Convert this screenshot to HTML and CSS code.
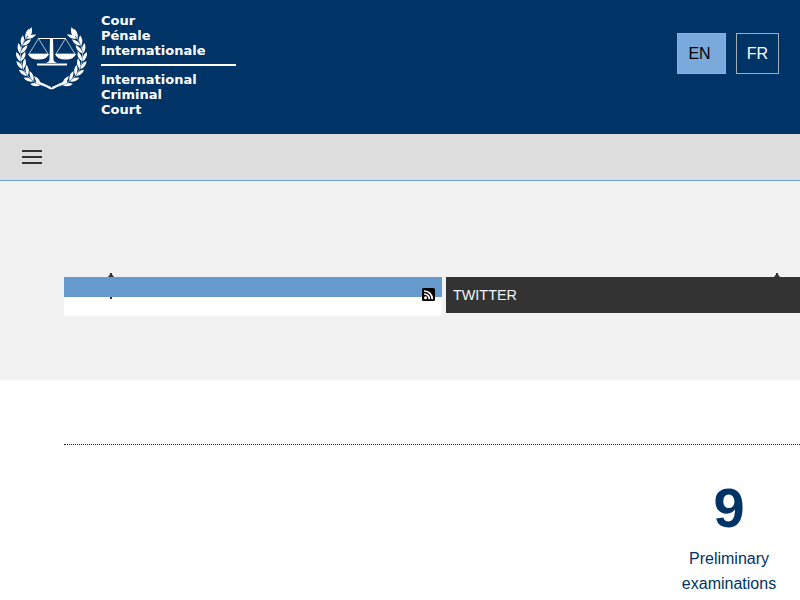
FILE: index.html
```html
<!DOCTYPE html>
<html lang="en">
<head>
<meta charset="utf-8">
<title>International Criminal Court</title>
<link rel="stylesheet" href="styles.css">
</head>
<body>
<header class="site-header">
  <a class="brand" href="#">
    <svg class="emblem" width="76" height="70" viewBox="14 24 76 70" aria-hidden="true">
      <defs>
        <g id="leaf">
          <path d="M51 87.500 Q46 91.500 41 89.500 Q45 85 51 87.500Z"/>
          <path d="M51 86.500 Q45 86 42 80.500 Q48.500 80.500 51 86.500Z"/>
        </g>
        <g id="branch">
          <use href="#leaf" transform="rotate(20 51 56)"/>
          <use href="#leaf" transform="rotate(35 51 56)"/>
          <use href="#leaf" transform="rotate(50 51 56)"/>
          <use href="#leaf" transform="rotate(65 51 56)"/>
          <use href="#leaf" transform="rotate(80 51 56)"/>
          <use href="#leaf" transform="rotate(95 51 56)"/>
          <use href="#leaf" transform="rotate(110 51 56)"/>
          <use href="#leaf" transform="rotate(125 51 56)"/>
          <path class="stem" d="M51 87 A31.500 31.500 0 0 1 27 36"/>
          <path d="M31.500 27 Q33.500 33 28.500 39 Q26.500 32 31.500 27Z"/>
        </g>
      </defs>
      <g class="wreath">
        <use href="#branch"/>
        <use href="#branch" transform="matrix(-1 0 0 1 103 0)"/>
        <path d="M36 81 Q44 82.500 52.500 88.500 L50.500 89.500 Q43 85 36 83Z"/>
        <path d="M67 81 Q59 82.500 50.500 88.500 L52.500 89.500 Q60 85 67 83Z"/>
      </g>
      <g class="scales">
        <path d="M50 38 H53 L53.500 60 Q54 62 57 63 H46 Q49 62 49.500 60Z"/>
        <rect x="37" y="63.500" width="30" height="2"/>
        <path d="M38 38 H66 V39 H38Z"/>
        <path class="cord" d="M38.500 38.500 L29 54 H48 Z M65.500 38.500 L56 54 H75 Z"/>
        <path d="M28 54 H49 Q47 59.500 38.500 59.500 Q30 59.500 28 54Z"/>
        <path d="M55 54 H76 Q74 59.500 65.500 59.500 Q57 59.500 55 54Z"/>
      </g>
    </svg>
    <span class="wordmark">
      <span class="wordmark-block">Cour<br>Pénale<br>Internationale</span>
      <span class="wordmark-rule"></span>
      <span class="wordmark-block">International<br>Criminal<br>Court</span>
    </span>
  </a>
  <nav class="languages">
    <a class="lang lang-active" href="#">EN</a>
    <a class="lang" href="#">FR</a>
  </nav>
</header>

<div class="menu-bar">
  <button class="burger" aria-label="Menu"><span></span><span></span><span></span></button>
</div>

<section class="feeds">
  <div class="feed feed-news">
    <span class="caret"></span>
    <div class="feed-title"></div>
    <div class="feed-body"></div>
    <svg class="rss" width="13" height="13" viewBox="0 0 13 13" aria-hidden="true">
      <rect width="13" height="13" rx="1.500" fill="#000"/>
      <circle cx="3.500" cy="9.800" r="1.500" fill="#fff"/>
      <path d="M2 6 A5 5 0 0 1 7.300 11.300 M2 3 A8 8 0 0 1 10.300 11.300" fill="none" stroke="#fff" stroke-width="1.700"/>
    </svg>
  </div>
  <div class="feed feed-twitter">
    <span class="caret caret-right"></span>
    <div class="twitter-bar">TWITTER</div>
  </div>
</section>

<main class="content">
  <hr class="divider">
  <div class="stats">
    <div class="stat">
      <div class="stat-number">9</div>
      <div class="stat-label">Preliminary examinations</div>
    </div>
  </div>
</main>
</body>
</html>
```

FILE: styles.css
```css
* { box-sizing: border-box; }

html, body {
  margin: 0;
  height: 600px;
  overflow: hidden;
  background: #fff;
  font-family: "Liberation Sans", Arial, sans-serif;
  font-size: 16px;
}

.site-header {
  height: 134px;
  background: #003366;
  display: flex;
  justify-content: space-between;
  align-items: flex-start;
  padding: 33px 21px 0 0;
}

.brand {
  display: flex;
  align-items: flex-start;
  margin-top: -20px;
  margin-left: 14px;
  color: #fff;
  text-decoration: none;
}

.emblem { margin-top: 11px; flex: none; }
.wreath { fill: #fff; }
.stem { fill: none; stroke: #fff; stroke-width: 0.6; }
.scales { fill: #fff; }
.scales .cord { fill: none; stroke: #fff; stroke-width: 0.7; }

.wordmark {
  display: flex;
  flex-direction: column;
  margin-left: 11px;
  width: 135px;
  font-family: "DejaVu Sans", sans-serif;
  font-weight: 700;
  font-size: 13px;
  line-height: 15px;
}

.wordmark-rule {
  height: 2px;
  background: #fff;
  margin: 6px 0 6px;
}

.languages { display: flex; gap: 10px; }

.lang {
  display: block;
  height: 41px;
  padding: 10px;
  border: 1px solid #a3adb8;
  color: #fff;
  line-height: 19px;
  text-decoration: none;
}

.lang-active {
  background: #7aa9dc;
  color: #000;
  padding-right: 14px;
}

.menu-bar {
  height: 47px;
  background: #dddddd;
  border-bottom: 1px solid #6fa3d8;
  padding: 16px 22px 0;
}

.burger {
  display: flex;
  flex-direction: column;
  gap: 4px;
  width: 20px;
  padding: 0;
  border: 0;
  background: none;
}

.burger span {
  display: block;
  width: 20px;
  height: 2px;
  background: #333;
}

.feeds {
  height: 199px;
  background: #f2f2f2;
  display: flex;
  align-items: flex-start;
  gap: 4px;
  padding-top: 96px;
  padding-left: 64px;
}

.feed { position: relative; }
.feed-news { width: 378px; }
.feed-twitter { flex: 1; }

.caret {
  position: absolute;
  top: -4px;
  left: 44px;
  width: 6px;
  height: 26px;
  background: linear-gradient(#333, #333) center / 2px 100% no-repeat;
}

.caret::before {
  content: "";
  position: absolute;
  top: 0;
  left: 0;
  border-left: 3px solid transparent;
  border-right: 3px solid transparent;
  border-bottom: 4px solid #333;
}

.caret-right { left: 328px; height: 10px; }

.feed-title {
  position: relative;
  height: 20px;
  background: #6699cc;
}

.feed-body {
  height: 19px;
  background: #fff;
}

.rss {
  position: absolute;
  top: 11px;
  right: 7px;
}

.twitter-bar {
  position: relative;
  height: 36px;
  padding-left: 7px;
  background: #333;
  color: #f5f5f5;
  font-size: 14.4px;
  line-height: 36px;
}

.content { padding: 64px 0 0 64px; }

.divider {
  margin: 0;
  border: 0;
  border-top: 1px dotted #222;
}

.stats {
  display: flex;
  justify-content: flex-end;
  padding-top: 31px;
}

.stat {
  width: 142px;
  text-align: center;
  color: #003366;
}

.stat-number {
  font-size: 56px;
  font-weight: 700;
  line-height: 64px;
  margin-bottom: 6px;
}

.stat-label {
  padding: 0 20px;
  line-height: 25px;
}
```
